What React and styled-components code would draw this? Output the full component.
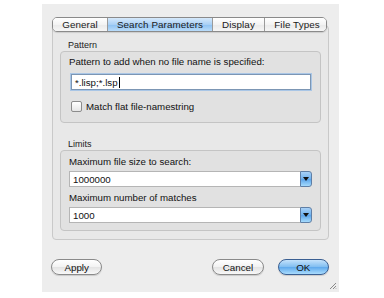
import React from "react"
import styled, { createGlobalStyle } from "styled-components"

const GlobalStyle = createGlobalStyle`
  html, body {
    margin: 0;
    padding: 0;
    background: #ffffff;
  }
  body {
    font-family: "Liberation Sans", Arial, sans-serif;
    font-size: 9.7px;
    color: #111;
  }
`

const Window = styled.div`
  position: relative;
  box-sizing: border-box;
  margin: 4px 0 0 42px;
  width: 297px;
  height: 288px;
  background: #ededed;
  padding: 13px 10px 0 10px;
`

const TabBar = styled.div`
  position: relative;
  z-index: 1;
  display: flex;
  height: 13px;
  margin: 0 2px -7px 0;
  border: 1px solid #8a8a8a;
  border-radius: 5px;
  overflow: hidden;
  box-shadow: 0 1px 1px rgba(0, 0, 0, 0.12);
`

const Tab = styled.div`
  flex: 0 0 ${p => p.w}px;
  display: flex;
  align-items: center;
  justify-content: center;
  font-size: 9.8px;
  letter-spacing: 0.1px;
  color: #1a1a1a;
  border-left: ${p => (p.first ? "none" : "1px solid #9a9a9a")};
  background: ${p =>
    p.active
      ? "linear-gradient(#d6e9fb 0%, #a9d0f5 50%, #8cc1f2 51%, #b9dcfa 100%)"
      : "linear-gradient(#ffffff 0%, #f3f3f3 50%, #e9e9e9 51%, #f6f6f6 100%)"};
`

const Panel = styled.div`
  box-sizing: border-box;
  height: 215px;
  background: #e8e8e8;
  border: 1px solid #c9c9c9;
  border-radius: 4px;
  padding: 13px 7px 0 7px;
`

const GroupLabel = styled.div`
  height: 12px;
  line-height: 12px;
  padding-left: 8px;
  font-size: 9px;
  color: #222;
`

const Group = styled.div`
  box-sizing: border-box;
  height: ${p => p.h}px;
  background: #e1e1e1;
  border: 1px solid #c4c4c4;
  border-radius: 4px;
  padding: ${p => p.pt}px 9px 0 8px;
  margin-bottom: ${p => p.mb || 0}px;
`

const FieldLabel = styled.div`
  height: 14px;
  line-height: 14px;
  color: #111;
  margin-bottom: ${p => p.mb}px;
`

const TextInput = styled.div`
  box-sizing: border-box;
  height: 16px;
  margin-left: 2px;
  background: #fff;
  border: 1px solid #7c96b4;
  box-shadow: 0 0 0 1px #a9c6e6;
  display: flex;
  align-items: center;
  padding-left: 3px;
`

const Caret = styled.span`
  display: inline-block;
  width: 1px;
  height: 11px;
  background: #000;
  margin-left: 1px;
`

const CheckRow = styled.div`
  display: flex;
  align-items: center;
  gap: 4px;
  margin-top: 11px;
  margin-left: 2px;
`

const CheckBox = styled.div`
  box-sizing: border-box;
  width: 11px;
  height: 11px;
  border: 1px solid #8c8c8c;
  border-radius: 2px;
  background: linear-gradient(#ffffff, #e6e6e6);
`

const Select = styled.div`
  display: flex;
  height: 16px;
  margin-right: -1px;
  margin-bottom: ${p => p.mb || 0}px;
`

const SelectField = styled.div`
  flex: 1;
  box-sizing: border-box;
  background: #fff;
  border: 1px solid #b5b5b5;
  border-right: none;
  display: flex;
  align-items: center;
  padding-left: 3px;
`

const SelectArrow = styled.div`
  box-sizing: border-box;
  flex: 0 0 12px;
  border: 1px solid #5f7fa6;
  border-radius: 0 3px 3px 0;
  background: linear-gradient(#a8d1f7 0%, #6fb1ee 50%, #5aa3ea 51%, #a4dafc 100%);
  display: flex;
  align-items: center;
  justify-content: center;
`

const ButtonRow = styled.div`
  display: flex;
  align-items: center;
  margin-top: 19px;
  margin-left: -1px;
`

const PushButton = styled.div`
  box-sizing: border-box;
  width: 52px;
  height: 16px;
  border-radius: 8px;
  border: 1px solid ${p => (p.primary ? "#3a5f92" : "#8a8a8a")};
  display: flex;
  align-items: center;
  justify-content: center;
  font-size: 9.8px;
  color: #111;
  margin-left: ${p => p.ml || 0}px;
  box-shadow: 0 1px 1px rgba(0, 0, 0, 0.15);
  background: ${p =>
    p.primary
      ? "linear-gradient(#c4e2fb 0%, #7fbdf1 50%, #5ea8ec 51%, #a9dcfd 100%)"
      : "linear-gradient(#ffffff 0%, #f2f2f2 50%, #e3e3e3 51%, #f8f8f8 100%)"};
`

const Grip = styled.svg`
  position: absolute;
  right: 2px;
  bottom: 2px;
`

function Arrow() {
  return (
    <svg width="6" height="4" viewBox="0 0 6 4">
      <path d="M0 0 H6 L3 4 Z" fill="#111" />
    </svg>
  )
}

export default function App() {
  return (
    <>
      <GlobalStyle />
      <Window>
        <TabBar>
          <Tab first w={54}>General</Tab>
          <Tab active w={104}>Search Parameters</Tab>
          <Tab w={51}>Display</Tab>
          <Tab w={64}>File Types</Tab>
        </TabBar>
        <Panel>
          <GroupLabel>Pattern</GroupLabel>
          <Group h={72} pt={3} mb={15}>
            <FieldLabel mb={5}>Pattern to add when no file name is specified:</FieldLabel>
            <TextInput>
              *.lisp;*.lsp<Caret />
            </TextInput>
            <CheckRow>
              <CheckBox />
              Match flat file-namestring
            </CheckRow>
          </Group>
          <GroupLabel>Limits</GroupLabel>
          <Group h={81} pt={4}>
            <FieldLabel mb={2}>Maximum file size to search:</FieldLabel>
            <Select mb={4}>
              <SelectField>1000000</SelectField>
              <SelectArrow>
                <Arrow />
              </SelectArrow>
            </Select>
            <FieldLabel mb={2}>Maximum number of matches</FieldLabel>
            <Select>
              <SelectField>1000</SelectField>
              <SelectArrow>
                <Arrow />
              </SelectArrow>
            </Select>
          </Group>
        </Panel>
        <ButtonRow>
          <PushButton>Apply</PushButton>
          <PushButton ml={110}>Cancel</PushButton>
          <PushButton primary ml={14}>OK</PushButton>
        </ButtonRow>
        <Grip width="8" height="8" viewBox="0 0 8 8">
          <path d="M7 1 L1 7 M7 4 L4 7 M7 6.5 L6.5 7" stroke="#8a8a8a" strokeWidth="1" />
        </Grip>
      </Window>
    </>
  )
}
